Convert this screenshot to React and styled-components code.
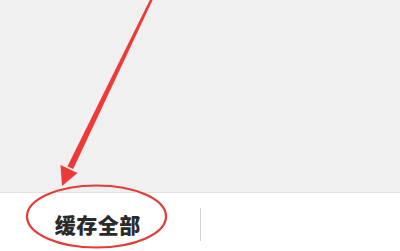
import React from "react";
import styled, { createGlobalStyle } from "styled-components";

const GlobalStyle = createGlobalStyle`
  html, body {
    margin: 0;
    padding: 0;
    overflow: hidden;
    background: #ffffff;
  }
`;

const App = () => {
  return (
    <Page>
      <GlobalStyle />
      <ContentArea />
      <Toolbar>
        <ToolButton>缓存全部</ToolButton>
        <Divider />
        <ToolButton />
      </Toolbar>
      <Annotation width="400" height="251" viewBox="0 0 400 251">
        <ellipse
          cx="96.5"
          cy="216.5"
          rx="69.5"
          ry="31"
          fill="none"
          stroke="#e53a35"
          strokeWidth="2.2"
        />
        {/* tapered arrow shaft */}
        <polygon points="149.8,0 152.6,0 73.2,169 67.4,166.6" fill="#ee3a36" />
        {/* arrow head */}
        <polygon points="60.5,165 77.5,173 62,186" fill="#ee3a36" />
      </Annotation>
    </Page>
  );
};

export default App;

const Page = styled.div`
  position: relative;
  width: 400px;
  height: 251px;
  display: flex;
  flex-direction: column;
  overflow: hidden;
  font-family: "Noto Sans CJK SC", "Noto Sans", sans-serif;
`;

const ContentArea = styled.div`
  height: 192px;
  flex-shrink: 0;
  background: #f0f0f0;
  border-bottom: 1px solid #e3e3e3;
`;

const Toolbar = styled.div`
  height: 62px;
  flex-shrink: 0;
  background: #ffffff;
  display: flex;
  align-items: center;
`;

const ToolButton = styled.div`
  flex: 1;
  text-align: center;
  font-size: 21px;
  font-weight: 900;
  color: #2a2a2a;
  letter-spacing: 0.5px;
  padding-right: 4px;
`;

const Divider = styled.div`
  width: 1px;
  height: 33px;
  background: #d2d2d2;
`;

const Annotation = styled.svg`
  position: absolute;
  left: 0;
  top: 0;
  pointer-events: none;
`;
